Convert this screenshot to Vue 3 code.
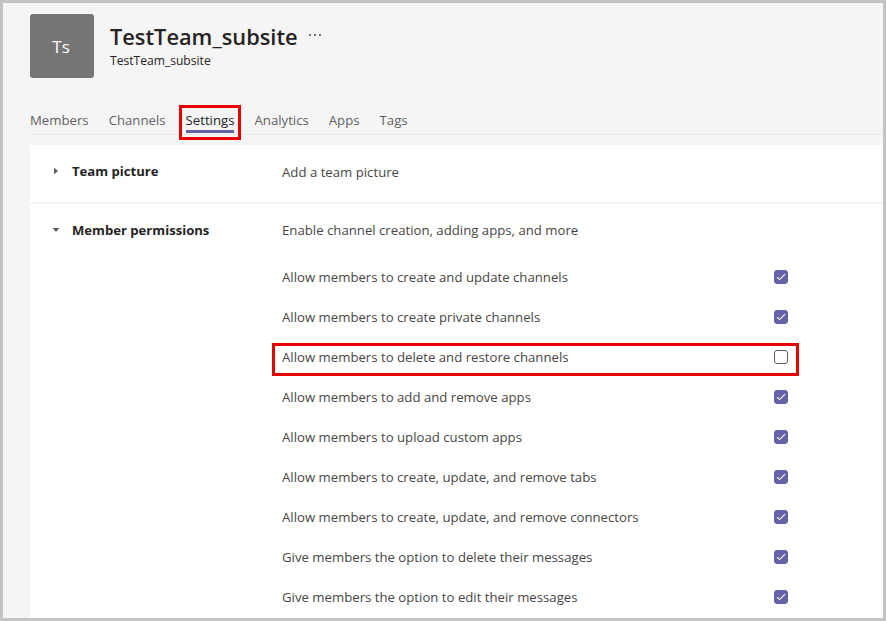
<template>
  <div class="pagina">
    <header class="equipo">
      <div class="avatar">Ts</div>
      <div class="equipo-info">
        <div class="equipo-titulo">
          <h1>TestTeam_subsite</h1>
          <span class="mas">
            <svg width="14" height="4" viewBox="0 0 14 4"><circle cx="2" cy="2" r="1" /><circle cx="7" cy="2" r="1" /><circle cx="12" cy="2" r="1" /></svg>
          </span>
        </div>
        <p class="equipo-sub">TestTeam_subsite</p>
      </div>
    </header>

    <nav class="tabs">
      <a v-for="tab in tabs" :key="tab" class="tab" :class="{ activo: tab === 'Settings' }">{{ tab }}</a>
    </nav>

    <main class="panel">
      <section class="seccion borde">
        <div class="seccion-cab">
          <svg class="flecha" width="6" height="8" viewBox="0 0 6 8"><path d="M1 0.5 5 4 1 7.5z" /></svg>
          <h2>Team picture</h2>
        </div>
        <p class="seccion-desc primera">Add a team picture</p>
      </section>

      <section class="seccion">
        <div class="seccion-cab">
          <svg class="flecha abajo" width="8" height="6" viewBox="0 0 8 6"><path d="M0.5 1h7L4 5z" /></svg>
          <h2>Member permissions</h2>
        </div>
        <div>
          <p class="seccion-desc">Enable channel creation, adding apps, and more</p>
          <ul class="permisos">
            <li v-for="p in permisos" :key="p.texto" class="permiso" :class="{ marcado: !p.activo }">
              <span>{{ p.texto }}</span>
              <span class="check" :class="{ on: p.activo }">
                <svg v-if="p.activo" width="10" height="8" viewBox="0 0 10 8"><path d="M1 4.2 3.6 6.6 9 1.2" fill="none" stroke="#fff" stroke-width="1.1" /></svg>
              </span>
            </li>
          </ul>
        </div>
      </section>
    </main>
  </div>
</template>

<script setup>
const tabs = ["Members", "Channels", "Settings", "Analytics", "Apps", "Tags"];

const permisos = [
  { texto: "Allow members to create and update channels", activo: true },
  { texto: "Allow members to create private channels", activo: true },
  { texto: "Allow members to delete and restore channels", activo: false },
  { texto: "Allow members to add and remove apps", activo: true },
  { texto: "Allow members to upload custom apps", activo: true },
  { texto: "Allow members to create, update, and remove tabs", activo: true },
  { texto: "Allow members to create, update, and remove connectors", activo: true },
  { texto: "Give members the option to delete their messages", activo: true },
  { texto: "Give members the option to edit their messages", activo: true },
];
</script>

<style scoped>
.pagina {
  box-sizing: border-box;
  width: 886px;
  height: 621px;
  border: 3px solid #c4c4c4;
  background: #f5f5f5;
  overflow: hidden;
  padding-left: 27px;
  font-family: "Open Sans", "Noto Sans", sans-serif;
  font-size: 13.2px;
  color: #484644;
}

.equipo {
  display: flex;
  gap: 16px;
  padding-top: 11px;
}

.avatar {
  width: 64px;
  height: 64px;
  border-radius: 3px;
  background: #757575;
  color: #fff;
  font-size: 17px;
  padding-right: 2px;
  box-sizing: border-box;
  display: flex;
  align-items: center;
  justify-content: center;
}

.equipo-info {
  padding-top: 8px;
}

.equipo-titulo {
  display: flex;
  align-items: center;
  gap: 10px;
}

.equipo-titulo h1 {
  margin: 0;
  font-size: 21.8px;
  line-height: 30px;
  font-weight: 600;
  color: #252423;
}

.mas {
  display: flex;
  margin-bottom: 4px;
  fill: #484644;
}

.equipo-sub {
  margin: 1px 0 0;
  font-size: 12.1px;
  line-height: 16px;
  color: #252423;
}

.tabs {
  display: flex;
  gap: 20px;
  margin-top: 27px;
  height: 30px;
  box-sizing: border-box;
  border-bottom: 1px solid #e8e8e8;
}

.tab {
  position: relative;
  height: 28px;
  line-height: 20px;
  padding-top: 5px;
  box-sizing: border-box;
  color: #616161;
}

.tab.activo {
  color: #252423;
  border-bottom: 3px solid #6264a7;
}

.tab.activo::after {
  content: "";
  position: absolute;
  inset: 0 -7px -10px -7px;
  border: 3px solid #e60000;
}

.panel {
  background: #fff;
  margin-top: 10px;
  height: 480px;
}

.seccion {
  display: grid;
  grid-template-columns: 252px 1fr;
}

.borde {
  height: 59px;
  border-bottom: 2px solid #f3f3f3;
  box-sizing: border-box;
}

.seccion-cab {
  display: flex;
  align-items: center;
  height: 20px;
  margin-top: 16px;
  padding-left: 22px;
}

.flecha {
  width: 8px;
  fill: #616161;
  margin-right: 12px;
}

.seccion-cab h2 {
  margin: 0;
  font-size: 13.1px;
  line-height: 20px;
  font-weight: 700;
  color: #252423;
}

.seccion-desc {
  margin: 0;
  padding-top: 16px;
  line-height: 20px;
}

.seccion-desc.primera {
  padding-top: 17px;
}

.permisos {
  list-style: none;
  margin: 17px 0 0;
  padding: 0;
}

.permiso {
  position: relative;
  display: flex;
  align-items: center;
  justify-content: space-between;
  width: 506px;
  height: 40px;
}

.permiso.marcado::after {
  content: "";
  position: absolute;
  left: -10px;
  right: -11px;
  top: 6px;
  bottom: 1px;
  border: 3px solid #e60000;
}

.check {
  box-sizing: border-box;
  width: 14px;
  height: 14px;
  border-radius: 3px;
  border: 1px solid #605e5c;
  display: flex;
  align-items: center;
  justify-content: center;
}

.check.on {
  background: #6264a7;
  border-color: #6264a7;
}
</style>
